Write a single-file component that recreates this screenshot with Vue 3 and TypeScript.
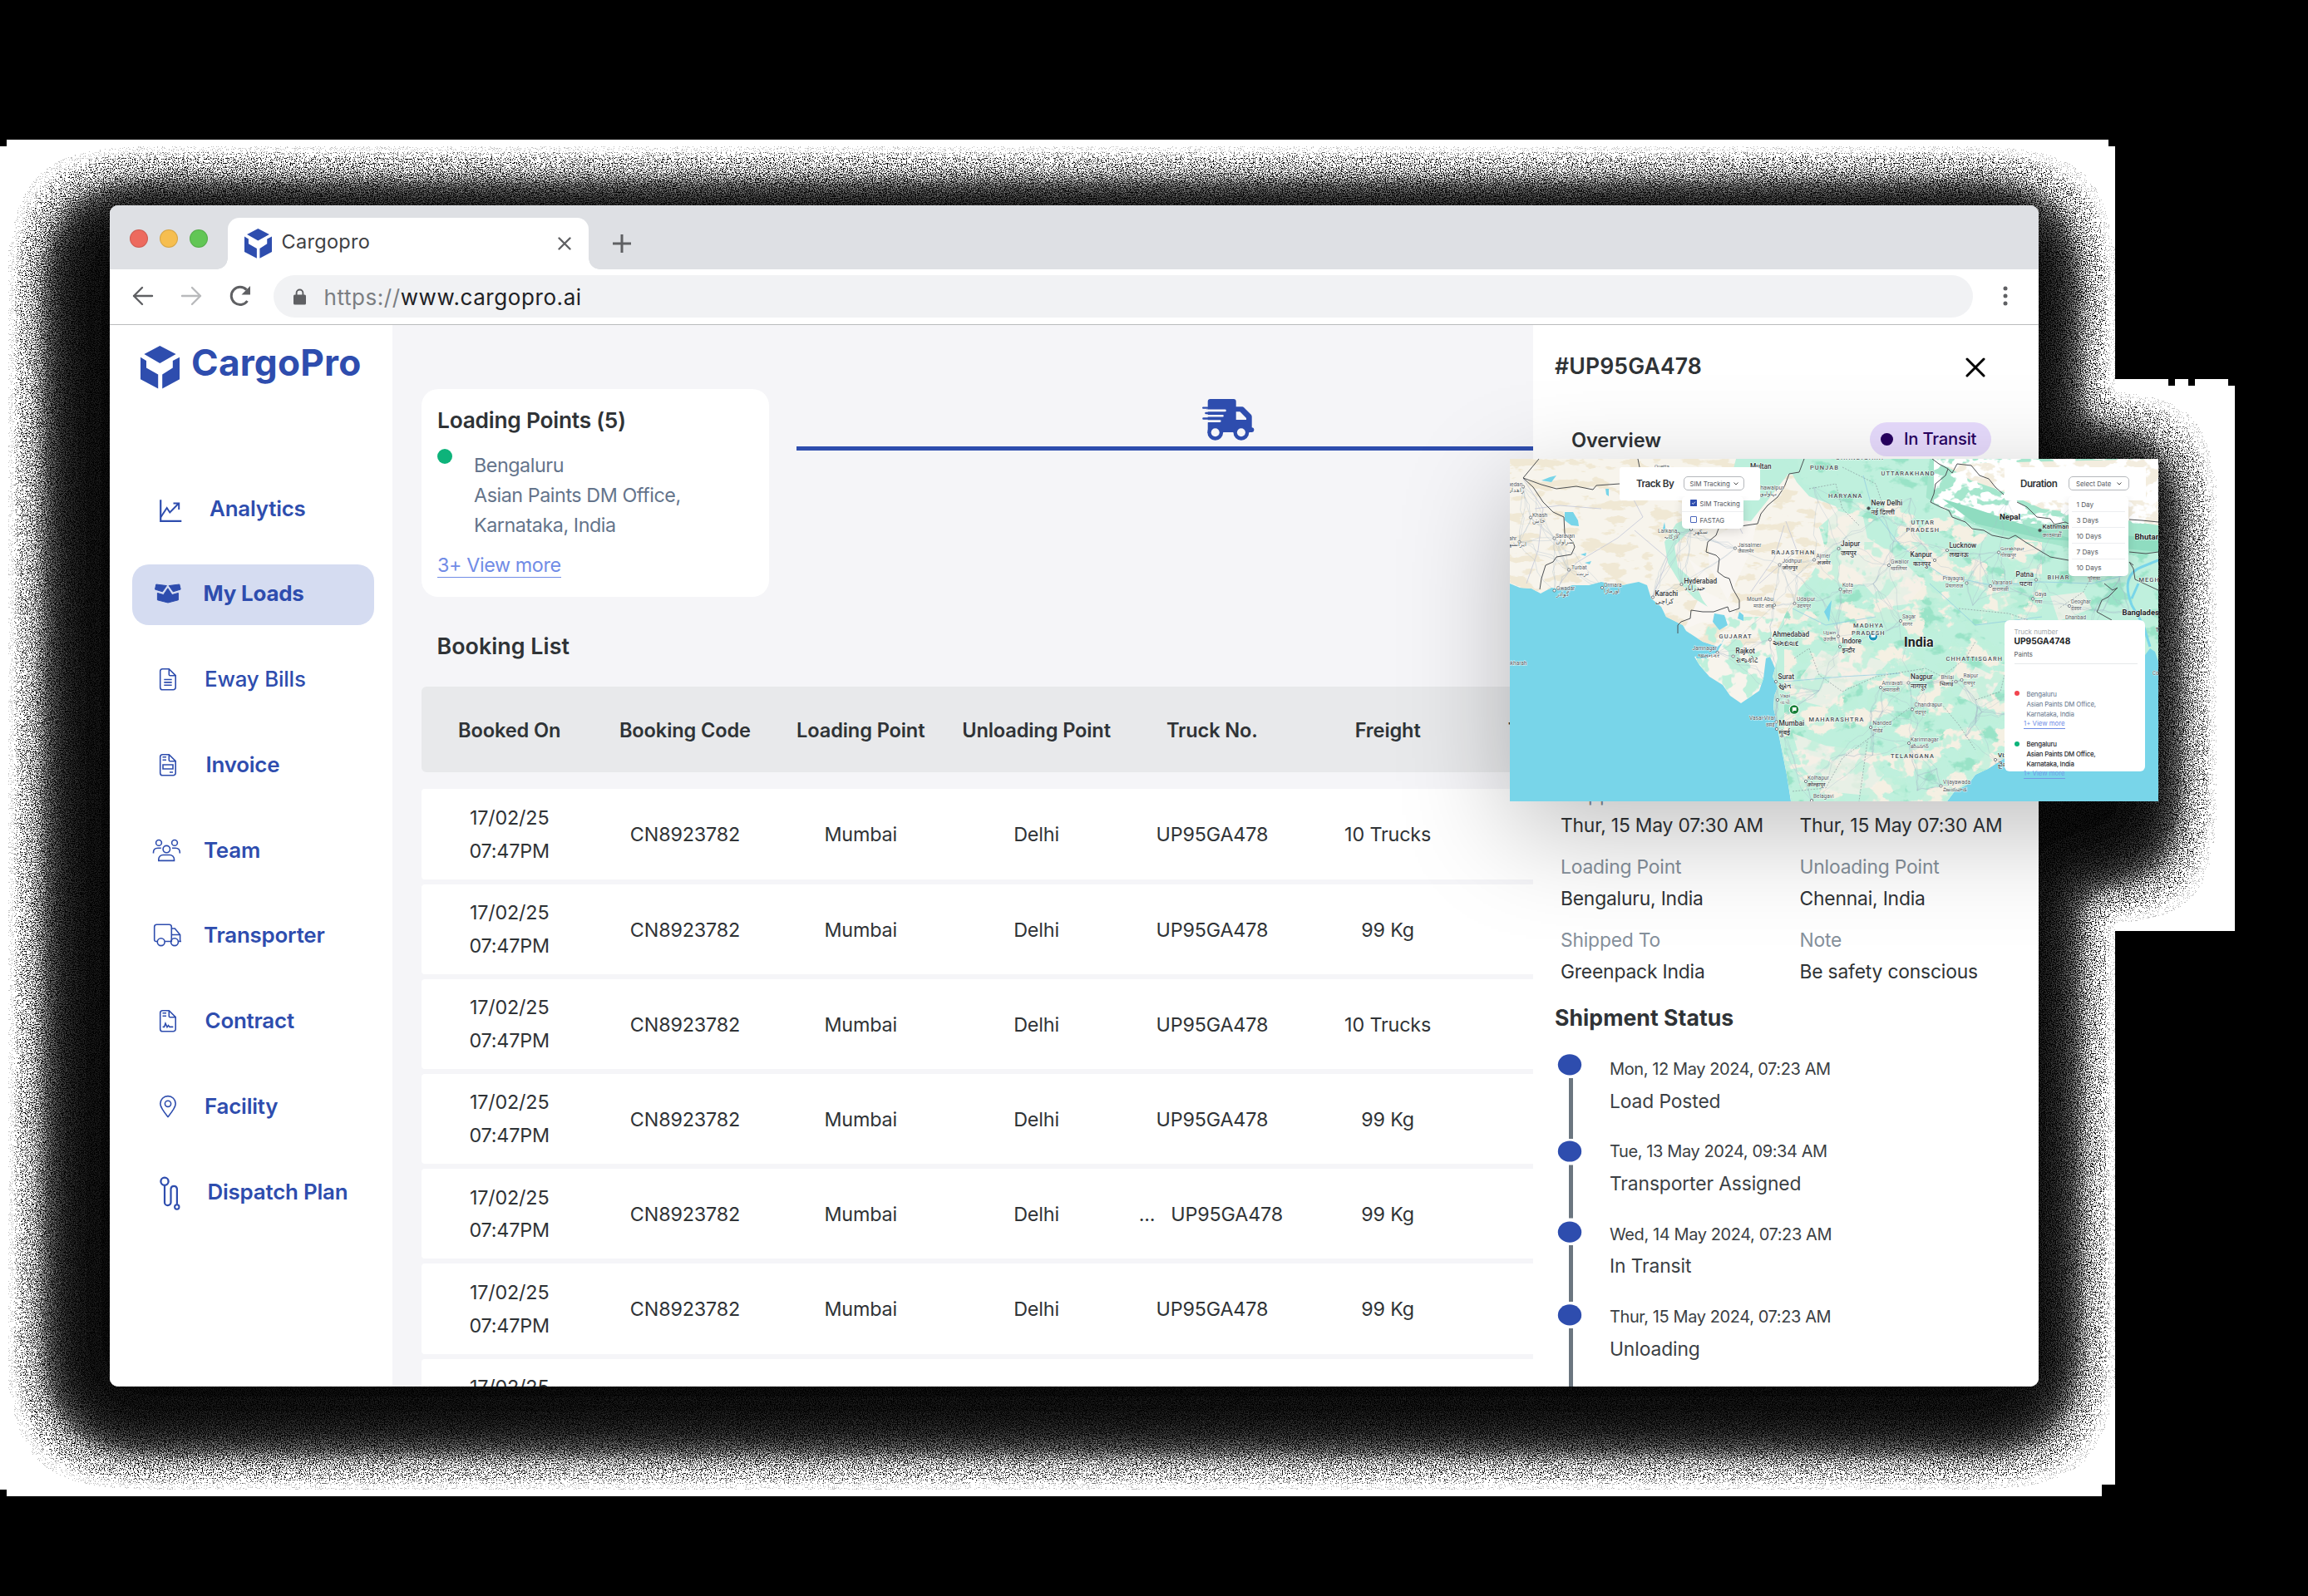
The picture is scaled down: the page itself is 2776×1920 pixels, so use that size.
<script setup lang="ts">
type Label = [x: number, y: number, size: number, kind: string, text: string]

interface NavItem { label: string; pad: number; weight: number; icon: string }

const nav: NavItem[] = [
  { label: 'Analytics', pad: 9, weight: 600, icon: 'chart' },
  { label: 'My Loads', pad: 1.5, weight: 700, icon: 'box' },
  { label: 'Eway Bills', pad: 3, weight: 500, icon: 'bill' },
  { label: 'Invoice', pad: 4.5, weight: 600, icon: 'invoice' },
  { label: 'Team', pad: 2, weight: 600, icon: 'team' },
  { label: 'Transporter', pad: 2, weight: 600, icon: 'truck' },
  { label: 'Contract', pad: 3.5, weight: 600, icon: 'contract' },
  { label: 'Facility', pad: 3, weight: 600, icon: 'pin' },
  { label: 'Dispatch Plan', pad: 6.5, weight: 600, icon: 'route' },
]

const columns = ['Booked On', 'Booking Code', 'Loading Point', 'Unloading Point', 'Truck No.', 'Freight', 'Transporter']
const freight = ['10 Trucks', '99 Kg', '10 Trucks', '99 Kg', '99 Kg', '99 Kg', '99 Kg']

const fields = [
  ['Shipped Date', 'Thur, 15 May 07:30 AM'],
  ['Estimated Date', 'Thur, 15 May 07:30 AM'],
  ['Loading Point', 'Bengaluru, India'],
  ['Unloading Point', 'Chennai, India'],
  ['Shipped To', 'Greenpack India'],
  ['Note', 'Be safety conscious'],
]

const steps = [
  { date: 'Mon, 12 May 2024, 07:23 AM', label: 'Load Posted', cy: 12.8, from: 29, to: 102 },
  { date: 'Tue, 13 May 2024, 09:34 AM', label: 'Transporter Assigned', cy: 18, from: 34.5, to: 98.5 },
  { date: 'Wed, 14 May 2024, 07:23 AM', label: 'In Transit', cy: 15.2, from: 31, to: 99 },
  { date: 'Thur, 15 May 2024, 07:23 AM', label: 'Unloading', cy: 15.9, from: 32, to: 104 },
]

const durations = ['1 Day', '3 Days', '10 Days', '7 Days', '10 Days']

// Inverse falloff: the grain gets brighter as the shadow thins out.
const falloff = Array.from({ length: 256 }, (_, i) => (i === 0 ? 1 : Math.min(1, 0.0085 / (i / 255))).toFixed(4)).join(' ')
// Past the last visible step of the shadow the surface is plain white.
const rim = Array.from({ length: 256 }, (_, i) => [1, 0.75, 0.4, 0.15][i] ?? 0).join(' ')

const labels: Label[] = [
  [174, 11, 6, 's', 'Quetta'], [289, 11.5, 8.2, 'c', 'Multan'], [361, 12.5, 7.4, 'r', 'PUNJAB'], [293, 37, 7, 's', 'Bahawalpur'],
  [299, 44, 6.5, 's', 'بہاولپور'], [383, 46.7, 7.4, 'r', 'HARYANA'], [-10, 33, 6.5, 's', 'Zahedan'], [-3, 40, 6.5, 's', 'زاهدان'],
  [27, 69.7, 6.5, 's', 'Khash'], [27, 77, 6.5, 's', 'خاش'], [55, 94.5, 6.5, 's', 'Saravan'], [55, 101.5, 6.5, 's', 'سراوان'],
  [-19, 98, 6.5, 's', 'Iranshahr'], [-5, 105, 6.5, 's', 'ایرانشهر'], [74, 132.5, 6.5, 's', 'Turbat'], [80, 139.5, 6.5, 's', 'تربت'],
  [56, 157.5, 6.5, 's', 'Gwadar'], [56, 165, 6.5, 's', 'گوادر'], [113, 153.5, 6.5, 's', 'Ormara'], [113, 161, 6.5, 's', 'اورماڑا'],
  [178, 88.5, 6.5, 's', 'Larkana'], [185, 95.5, 6.5, 's', 'لاڑکانہ'], [221, 90, 6.5, 's', 'سکھر'],
  [209.5, 149.5, 8.2, 'c', 'Hyderabad'], [209.5, 158, 7.5, 'c', 'حيدرآباد'], [174.5, 164.5, 8.2, 'c', 'Karachi'], [175, 173.5, 8, 'c', 'كراچی'],
  [274, 105.5, 6.5, 's', 'Jaisalmer'], [274, 113, 6.2, 's', 'जैसलमेर'], [314.5, 114.5, 7.4, 'r', 'RAJASTHAN'],
  [327.5, 125, 6.5, 's', 'Jodhpur'], [327.5, 133, 7, 'c', 'जोधपुर'], [368.5, 119, 6.5, 's', 'Ajmer'], [369, 127, 6.5, 'c', 'अजमेर'],
  [285, 171, 6.5, 's', 'Mount Abu'], [293, 179, 6.5, 's', 'माउंट आबू'], [345, 171, 6.5, 's', 'Udaipur'], [345, 179, 6.5, 's', 'उदयपुर'],
  [251.5, 216, 7.4, 'r', 'GUJARAT'], [316, 214, 8.2, 'c', 'Ahmedabad'], [316, 224.5, 7.6, 'c', 'અમદાવાદ'],
  [377, 210.5, 6.2, 's', 'Ujjain'], [377, 218.5, 6.2, 's', 'उज्जैन'], [219.5, 230, 6.5, 's', 'Jamnagar'], [226, 238.5, 6.5, 'c', 'જામનગર'],
  [271.5, 233.5, 8.2, 'c', 'Rajkot'], [271.5, 244.5, 7.8, 'c', 'રાજકોટ'], [322.5, 264.5, 8.2, 'c', 'Surat'], [322.5, 275.5, 7.8, 'c', 'સુરત'],
  [325, 286.5, 6.2, 's', 'Vapi'], [325, 294.5, 6.2, 's', 'વાપી'], [288, 314, 6.5, 's', 'Vasai-Virar'], [308, 321.5, 6, 's', 'वसई'],
  [323.5, 321, 8.4, 'c', 'Mumbai'], [323.5, 332, 8, 'c', 'मुंबई'], [359.5, 315.7, 7.4, 'r', 'MAHARASHTRA'],
  [358, 385.5, 6.5, 's', 'Kolhapur'], [358, 394, 6.5, 'c', 'कोल्हापूर'], [365, 408, 6.5, 's', 'Belagavi'], [-7, 248, 6.5, 's', 'Ankharah'],
  [392, 0.7, 7.4, 'r', 'CHANDIGARH'], [446.5, 19.7, 7.4, 'r', 'UTTARAKHAND'], [434.5, 55.5, 8.4, 'c', 'New Delhi'], [434.5, 66.5, 8, 'c', 'नई दिल्ली'],
  [482.5, 79, 7.4, 'r', 'UTTAR'], [476.5, 88, 7.4, 'r', 'PRADESH'], [398, 105, 8.2, 'c', 'Jaipur'], [398, 116, 8, 'c', 'जयपुर'],
  [481.5, 118, 8.2, 'c', 'Kanpur'], [485, 129, 8, 'c', 'कानपुर'], [528.5, 106.5, 8.2, 'c', 'Lucknow'], [528.5, 117.5, 8, 'c', 'लखनऊ'],
  [458, 125.5, 6.5, 's', 'Gwalior'], [458, 133.5, 6.5, 's', 'ग्वालियर'], [590, 109.5, 6.2, 's', 'Gorakhpur'], [590, 118, 6.2, 's', 'गोरखपुर'],
  [589, 72.5, 9.6, 'b', 'Nepal'], [640.5, 84, 8, 'c', 'Kathmandu'], [640.5, 93.5, 7, 's', 'काठमाडौँ'], [751.5, 96.5, 9.6, 'b', 'Bhutan'],
  [520.5, 146, 6.3, 's', 'Prayagraj'], [524, 154.5, 6.3, 's', 'प्रयागराज'], [580, 150.5, 6.3, 's', 'Varanasi'], [580, 159, 6.3, 's', 'वाराणसी'],
  [608.5, 141.5, 8.2, 'c', 'Patna'], [613, 152.5, 8, 'c', 'पटना'], [646.5, 144.5, 7.4, 'r', 'BIHAR'], [695, 145.5, 6.3, 's', 'पूर्णिया'],
  [756.5, 147.5, 7.4, 'r', 'MEGHALAYA'], [631.5, 165, 6.3, 's', 'Gaya'], [631.5, 173.5, 6.3, 's', 'गया'], [675, 174, 6.3, 's', 'Deoghar'],
  [675, 182, 6, 's', 'देवघर'], [668, 192.5, 6.3, 's', 'Dhanbad'], [400, 153.5, 6.3, 's', 'Kota'], [400, 161.5, 6.3, 's', 'कोटा'],
  [736.5, 187.5, 9.4, 'b', 'Bangladesh'], [472, 192, 6.3, 's', 'Sagar'], [472, 200.5, 6.3, 's', 'सागर'],
  [413, 202.5, 7.4, 'r', 'MADHYA'], [399.5, 222, 8.2, 'c', 'Indore'], [399.5, 232.5, 7.6, 'c', 'इन्दौर'],
  [474, 226, 16, 'b', 'India'], [524.5, 243, 7.4, 'r', 'CHHATTISGARH'], [482, 265, 8.2, 'c', 'Nagpur'], [482, 276, 8, 'c', 'नागपूर'],
  [518.5, 264.5, 6.3, 's', 'Bhilai'], [517, 272.5, 6.6, 'c', 'भिलाई'], [545.5, 263, 6.3, 's', 'Raipur'], [545.5, 271.5, 6.3, 's', 'रायपुर'],
  [447.5, 271.5, 6.3, 's', 'Amravati'], [447.5, 280, 6.3, 's', 'अमरावती'], [486.5, 298, 6.5, 's', 'Chandrapur'], [487, 306.5, 6.3, 's', 'चंद्रपूर'],
  [436.5, 320, 6.5, 's', 'Nanded'], [436.5, 328.5, 6.3, 's', 'नांदेड'], [482, 339.5, 6.5, 's', 'Karimnagar'], [482, 348, 6.3, 's', 'కరీంనగర్'],
  [458, 359.5, 7.4, 'r', 'TELANGANA'], [587, 358.5, 8, 'c', 'Vizag'], [587, 370, 8, 'c', 'వైజాగ్'], [521, 391, 6.5, 's', 'Vijayawada'],
  [521, 399.5, 6.3, 's', 'విజయవాడ'], [773, 259.5, 6.3, 's', "Cox's"], [776.5, 208, 7.4, 'r', 'TR'],
]

const cities: [number, number][] = [
  [16, 33.5], [25, 70.5], [53.5, 95.5], [11.5, 100], [71, 133.5], [53.5, 158.5], [111, 155], [202.5, 90], [206.5, 151], [172, 166.5],
  [218, 85], [271, 107.5], [324.5, 127.5], [366, 121.5], [342.5, 174], [318, 176], [313, 217.5], [249.5, 233], [268.5, 237.5], [320, 268],
  [322, 290], [320.5, 316.5], [321, 325], [356, 388], [363, 411], [395.5, 108], [511, 122], [526, 110], [456, 128], [588, 112.5],
  [549.5, 149.5], [578, 153], [633, 145.5], [629, 168.5], [673, 177], [397.5, 157], [470, 195], [397, 226], [395, 213.5], [479.5, 269.5],
  [536.5, 268], [543.5, 266], [446, 275], [484, 301.5], [434, 323], [480, 342], [584, 362], [518.5, 393.5],
]

function prng(seed: number) {
  let s = seed
  return () => (s = (s * 16807) % 2147483647) / 2147483647
}

// Meandering roads that join every town to its nearest neighbours.
const roads = (() => {
  const rnd = prng(71)
  const extra: [number, number][] = []
  for (let i = 0; i < 60; i++) extra.push([345 + rnd() * 400, 5 + rnd() * 400])
  const pts = [...cities, ...extra]
  const out: string[] = []
  pts.forEach(([x, y]) => {
    pts
      .map(([a, b]) => ({ a, b, d: Math.hypot(a - x, b - y) }))
      .filter((p) => p.d > 1 && p.d < 120)
      .sort((p, q) => p.d - q.d)
      .slice(0, 4)
      .forEach(({ a, b, d }) => {
        let path = `M${x} ${y}`
        for (let k = 1; k < 5; k++) {
          const t = k / 5
          const j = d * 0.13
          path += `L${(x + (a - x) * t + (rnd() - 0.5) * j).toFixed(1)} ${(y + (b - y) * t + (rnd() - 0.5) * j).toFixed(1)}`
        }
        out.push(path + `L${a} ${b}`)
      })
  })
  return out.join('')
})()

const land =
  'M0 0H780V245L773 247L764 240L750 262L700 300L640 330L610 345L600 357L575 373L560 380L552 391L535 400L526 412H338L333 380L327 350L323 330L320 312L317 300L318 285L322 275L316 262L319 252L313 238L308 240L305 264L300 279L278 294L265 285L256 272L240 262L228 248L222 238L236 236L248 232L256 222L250 226L232 220L212 207L208 200L196 194L188 190L182 178L170 168L165 152L155 148L130 153L118 150L110 148L95 152L75 152L62 157L50 155L37 162L26 156L12 155L0 150Z'
const lush =
  'M345 0H780V250L764 240L750 262L700 300L640 330L610 345L600 357L575 373L560 380L552 391L535 400L526 412H338L333 380L327 350L323 330L320 312L317 300L318 285L322 275L316 262L322 240L318 215L330 190L345 160L362 140L380 110L372 82L395 62L380 36L352 30Z'
</script>

<template>
  <div class="stage">
    <svg class="halo" width="2776" height="1920" viewBox="0 0 2776 1920">
      <defs>
        <filter id="grain" filterUnits="userSpaceOnUse" x="0" y="0" width="2776" height="1920" color-interpolation-filters="sRGB">
          <feGaussianBlur in="SourceAlpha" stdDeviation="38" />
          <feColorMatrix result="depth" values="0 0 0 1 0  0 0 0 1 0  0 0 0 1 0  0 0 0 0 1" />
          <feComponentTransfer in="depth" result="gain">
            <feFuncR type="table" :tableValues="falloff" />
            <feFuncG type="table" :tableValues="falloff" />
            <feFuncB type="table" :tableValues="falloff" />
          </feComponentTransfer>
          <feComponentTransfer in="depth" result="rim">
            <feFuncR type="table" :tableValues="rim" />
            <feFuncG type="table" :tableValues="rim" />
            <feFuncB type="table" :tableValues="rim" />
          </feComponentTransfer>
          <feTurbulence type="fractalNoise" baseFrequency="0.83" numOctaves="2" seed="8" />
          <feColorMatrix result="noise" values="4 0 0 0 -1.5  4 0 0 0 -1.5  4 0 0 0 -1.5  0 0 0 0 1" />
          <feComposite in="gain" in2="noise" operator="arithmetic" k1="9" k2="0" k3="0" k4="0" result="speckle" />
          <feComposite in="speckle" in2="rim" operator="arithmetic" k1="0" k2="1" k3="1" k4="0" />
        </filter>
        <clipPath id="haloArea">
          <path d="M8 168H2536V176H2544V456H2608V464H2616V456H2632V464H2640V456H2680V464H2688V1120H2544V1786H2528V1800H8V1792H0V176H8Z" />
        </clipPath>
      </defs>
      <g clip-path="url(#haloArea)">
        <g filter="url(#grain)">
          <rect x="100" y="266" width="2354" height="1436" rx="40" />
          <rect x="2200" y="560" width="376" height="462" rx="20" />
        </g>
      </g>
    </svg>

    <div class="window">
      <header class="tabs">
        <div class="lights"><i class="red" /><i class="yellow" /><i class="green" /></div>
        <div class="tab">
          <svg class="fav" viewBox="0 0 47 52" preserveAspectRatio="none">
            <path d="M23.3 0L42.6 10L23.3 21L4.4 10ZM0 13.7L7 18V26.5L21.2 34.5V51.5L0 40.3ZM47 13.7L38.8 18V26.5L26.2 34.5V51.5L47 40.3Z" />
          </svg>
          <span>Cargopro</span>
          <svg class="tabx" viewBox="0 0 16 16"><path d="M1.5 1.5L14.5 14.5M14.5 1.5L1.5 14.5" /></svg>
        </div>
        <svg class="plus" viewBox="0 0 22 22"><path d="M11 0V22M0 11H22" /></svg>
      </header>
      <div class="toolbar">
        <svg class="tools" viewBox="0 0 197 65">
          <g fill="none" stroke="#5f6063" stroke-width="2.4" stroke-linecap="round" stroke-linejoin="round">
            <path d="M51 32H29M39 22L29 32L39 42" />
            <path d="M87 32H109M99 22L109 32L99 42" stroke="#b9babc" />
            <path d="M165.5 38A10.6 10.6 0 1 1 164.5 24.6" stroke-width="3" stroke-linecap="butt" />
          </g>
          <path d="M169 20V30.5H158.5Z" fill="#5f6063" />
        </svg>
        <div class="url">
          <svg class="lock" viewBox="0 0 15 20">
            <path d="M3.6 8V5.4a3.9 3.9 0 0 1 7.8 0V8" fill="none" stroke="#5f6063" stroke-width="1.9" />
            <rect y="7.6" width="15" height="12" rx="1.6" fill="#5f6063" />
          </svg>
          <p><span>https://</span>www.cargopro.ai</p>
        </div>
        <svg class="dots" viewBox="0 0 6 24"><circle cx="3" cy="3" r="2.5" /><circle cx="3" cy="12" r="2.5" /><circle cx="3" cy="21" r="2.5" /></svg>
      </div>

      <div class="page">
        <aside class="sidebar">
          <div class="brand">
            <svg viewBox="0 0 47 52">
              <path d="M23.3 0L42.6 10L23.3 21L4.4 10ZM0 13.7L7 18V26.5L21.2 34.5V51.5L0 40.3ZM47 13.7L38.8 18V26.5L26.2 34.5V51.5L47 40.3Z" />
            </svg>
            <b>CargoPro</b>
          </div>
          <nav>
            <a v-for="item in nav" :key="item.label" :class="{ active: item.icon === 'box' }">
              <svg viewBox="0 0 84 73">
                <template v-if="item.icon === 'chart'">
                  <path d="M34.2 24.3V49.8H59.3" stroke-width="2.2" />
                  <path d="M34.5 45L41.7 34L45.3 39.5L55.5 29M49.5 28.4H56.2V36" stroke-width="2" />
                </template>
                <g v-else-if="item.icon === 'box'" fill="#2e4dae" stroke="#2e4dae" stroke-width="1" stroke-linejoin="round">
                  <path d="M28.8 24L41.4 25.6L36.4 32.8L27.5 30ZM56.8 24L44.2 25.6L49.2 32.8L58.2 30Z" />
                  <path d="M30.4 34.4L37.6 36.6L42.8 28.8L48 36.6L55.4 34.4V42.8L43 46L30.4 42.8Z" />
                </g>
                <template v-else-if="item.icon === 'bill'">
                  <path d="M44.3 22.8H36.5a2.8 2.8 0 0 0-2.8 2.8V44.9a2.8 2.8 0 0 0 2.8 2.8H49.4a2.8 2.8 0 0 0 2.8-2.8V30.7ZV29.4a1.3 1.3 0 0 0 1.3 1.3H52.2" />
                  <path d="M38.3 35.5H47.7M38.3 38.9H47.7M38.3 42.3H47.7" />
                </template>
                <template v-else-if="item.icon === 'invoice'">
                  <path d="M44.3 22.8H36.5a2.8 2.8 0 0 0-2.8 2.8V44.9a2.8 2.8 0 0 0 2.8 2.8H49.4a2.8 2.8 0 0 0 2.8-2.8V30.7ZV29.4a1.3 1.3 0 0 0 1.3 1.3H52.2" />
                  <path d="M36.5 25.8H41M36.5 29.2H41M37 35H49V40H37ZM45 44H49" />
                </template>
                <template v-else-if="item.icon === 'team'">
                  <circle cx="32" cy="25.9" r="3.4" /><circle cx="51" cy="25.9" r="3.4" /><circle cx="41.3" cy="33.6" r="4.2" />
                  <path d="M25.5 38.5V37.5C25.5 34 28 32.3 31 32.3H34.8M57.3 38.5V37.5C57.3 34 55 32.3 52 32.3H48M31.8 47.4V45.8A5.3 5.3 0 0 1 37.1 40.5H45.2A5.3 5.3 0 0 1 50.5 45.8V47.4Z" />
                </template>
                <template v-else-if="item.icon === 'truck'">
                  <path d="M30 42.5H28.6A1.9 1.9 0 0 1 26.7 40.6V25A2.8 2.8 0 0 1 29.5 22.2H44.5A2.8 2.8 0 0 1 47.3 25V42.5H39.2M47.3 27H51.3L57.6 34.5V42.5H55.5M47.3 34.5H57.6M47 42.5H47.3M57.6 42.5H59" />
                  <circle cx="34.7" cy="43.2" r="4.4" /><circle cx="51" cy="43.2" r="4.4" />
                </template>
                <template v-else-if="item.icon === 'contract'">
                  <path d="M44.3 22.8H36.5a2.8 2.8 0 0 0-2.8 2.8V44.9a2.8 2.8 0 0 0 2.8 2.8H49.4a2.8 2.8 0 0 0 2.8-2.8V30.7ZV29.4a1.3 1.3 0 0 0 1.3 1.3H52.2" />
                  <path d="M36.5 25.8H41M36.5 29.2H41M36.6 42.4H38.5L40 38.2L42 42.6L43.5 40.5L45 42.4H49.3" />
                </template>
                <template v-else-if="item.icon === 'pin'">
                  <path d="M43 47.6C38 41.5 33.8 36.5 33.8 31.8a9.2 9.2 0 0 1 18.4 0C52.2 36.5 48 41.5 43 47.6Z" />
                  <circle cx="43" cy="31.8" r="3.6" />
                </template>
                <template v-else>
                  <circle cx="39" cy="22.3" r="4.6" stroke-width="2.3" />
                  <path d="M39 27.2V47.4a3.75 3.75 0 0 0 7.5 0V31a3.75 3.75 0 0 1 7.4 0V49.8" stroke-width="2.2" />
                  <circle cx="53.8" cy="53" r="2.7" stroke-width="2" />
                </template>
              </svg>
              <span :style="{ paddingLeft: item.pad + 'px', fontWeight: item.weight }">{{ item.label }}</span>
            </a>
          </nav>
        </aside>

        <main>
          <div class="top">
            <section class="card">
              <h2>Loading Points (5)</h2>
              <div class="place"><i /><p>Bengaluru<br />Asian Paints DM Office,<br />Karnataka, India</p></div>
              <a>3+ View more</a>
            </section>
            <div class="route">
              <svg viewBox="0 0 63 50">
                <path d="M9.7 0H37.7a3 3 0 0 1 3 3V9.3H48a3 3 0 0 1 2.2 1L58.5 18.5a4 4 0 0 1 1.2 2.8V34.2h.3a2.4 2.4 0 0 1 2.3 2.4v1a2.4 2.4 0 0 1-2.4 2.4H56A9.3 9.3 0 0 1 37.7 40H25A9.3 9.3 0 0 1 6.7 40V11.8H1.2a1.2 1.2 0 0 1 0-2.4H6.7V3a3 3 0 0 1 3-3Z" />
                <path d="M5 12H27.5V28H5Z" />
                <path d="M5.4 12.4H6.7V28.4H1V12.4Z" fill="#f5f5f8" />
                <path d="M1.5 23.5H26M4.5 17H26" stroke="#2e4dae" stroke-width="2.6" stroke-linecap="round" />
                <path d="M6 13.9H27.5M6 20.2H24.5M6 26.6H21.3" stroke="#f5f5f8" stroke-width="2.6" stroke-linecap="round" />
                <path d="M40.7 15.3H45.4L53 23V25H40.7Z" fill="#f5f5f8" />
                <circle cx="15.7" cy="40.3" r="9.4" /><circle cx="46.9" cy="40.3" r="9.4" />
                <circle cx="15.7" cy="40.3" r="5" fill="#f5f5f8" /><circle cx="46.9" cy="40.3" r="5" fill="#f5f5f8" />
              </svg>
              <hr />
            </div>
          </div>
          <h3>Booking List</h3>
          <div class="table">
            <div class="thead"><span v-for="c in columns" :key="c">{{ c }}</span></div>
            <div v-for="(f, i) in freight" :key="i" class="row">
              <span>17/02/25<br />07:47PM</span><span>CN8923782</span><span>Mumbai</span><span>Delhi</span>
              <span class="plate"><em v-if="i === 4">...</em>UP95GA478</span><span>{{ f }}</span><span />
            </div>
          </div>
        </main>

        <section class="panel">
          <div class="phead">
            <h2>#UP95GA478</h2>
            <svg viewBox="0 0 24 24"><path d="M2 2L22 22M22 2L2 22" /></svg>
          </div>
          <div class="overview">
            <h3>Overview</h3>
            <span class="badge"><i />In Transit</span>
          </div>
          <dl>
            <div v-for="[k, v] in fields" :key="k"><dt>{{ k }}</dt><dd>{{ v }}</dd></div>
          </dl>
          <h2 class="status">Shipment Status</h2>
          <ol>
            <li v-for="s in steps" :key="s.label">
              <svg width="62" height="99" viewBox="0 0 62 99">
                <ellipse cx="14" :cy="s.cy" rx="14.2" ry="12.6" fill="#2e4dae" />
                <rect x="13" :y="s.from" width="5" :height="s.to - s.from" fill="#6b7680" />
              </svg>
              <div><small>{{ s.date }}</small><p>{{ s.label }}</p></div>
            </li>
          </ol>
        </section>
      </div>
      <div class="map-shadow" />
    </div>

    <div class="map">
      <svg class="tiles" width="780" height="412" viewBox="0 0 780 412">
        <defs>
          <clipPath id="landClip"><path :d="land" /></clipPath>
          <clipPath id="lushClip"><path :d="lush" /></clipPath>
          <filter id="sand" x="0" y="0" width="1" height="1" color-interpolation-filters="sRGB">
            <feTurbulence type="fractalNoise" baseFrequency="0.028 0.04" numOctaves="5" seed="12" />
            <feColorMatrix values="0 0 0 0 .96  0 0 0 0 .94  0 0 0 0 .89  16 0 0 0 -8.3" />
          </filter>
          <filter id="forest" x="0" y="0" width="1" height="1" color-interpolation-filters="sRGB">
            <feTurbulence type="fractalNoise" baseFrequency="0.035 0.05" numOctaves="4" seed="31" />
            <feColorMatrix values="0 0 0 0 .6  0 0 0 0 .89  0 0 0 0 .78  9 0 0 0 -5.2" />
          </filter>
          <filter id="ridge" x="0" y="0" width="1" height="1" color-interpolation-filters="sRGB">
            <feTurbulence type="fractalNoise" baseFrequency="0.035 0.08" numOctaves="4" seed="5" />
            <feColorMatrix values="0 0 0 0 .94  0 0 0 0 .91  0 0 0 0 .83  14 0 0 0 -7.6" />
          </filter>
          <filter id="snow" x="0" y="0" width="1" height="1" color-interpolation-filters="sRGB">
            <feTurbulence type="fractalNoise" baseFrequency="0.06 0.09" numOctaves="3" seed="9" />
            <feColorMatrix values="0 0 0 0 1  0 0 0 0 1  0 0 0 0 1  12 0 0 0 -5.4" />
          </filter>
          <filter id="farms" x="0" y="0" width="1" height="1" color-interpolation-filters="sRGB">
            <feTurbulence type="fractalNoise" baseFrequency="0.05" numOctaves="3" seed="2" />
            <feColorMatrix values="0 0 0 0 .75  0 0 0 0 .94  0 0 0 0 .86  16 0 0 0 -8.6" />
          </filter>
          <clipPath id="hills"><path d="M450 0H780V112L720 118L650 102L590 92L540 72L500 46L470 30Z" /></clipPath>
        </defs>
        <rect width="780" height="412" fill="#78d5e9" />
        <path :d="land" fill="#f7f4ec" />
        <g clip-path="url(#landClip)">
          <rect width="400" height="230" filter="url(#ridge)" />
          <path d="M215 120L235 160L275 178L262 200L232 196L210 205L240 140Z M300 60L290 110L262 170L240 130L238 100Z" fill="#f9f6f2" />
          <path d="M272 0H360L350 20L335 18L310 50L290 75L250 72L225 82L212 90L198 105L202 130L222 148L232 170L238 178L222 168L205 150L190 125L186 100L200 78L230 64L262 40Z" fill="#bcefdc" />
          <path d="M330 0H400V60L360 45L345 28Z" fill="#bcefdc" />
          <rect x="225" y="190" width="130" height="105" filter="url(#farms)" />
          <path :d="lush" fill="#bff0dd" />
          <g clip-path="url(#lushClip)">
            <rect x="330" width="450" height="412" filter="url(#forest)" />
            <rect x="330" y="50" width="310" height="362" filter="url(#sand)" />
            <g fill="#f6f1e8" opacity=".75">
              <path d="M384 60L425 70L430 95L470 120L500 150L478 175L450 178L425 150L400 150L370 125L382 100Z" />
              <path d="M375 230L420 235L455 245L440 262L410 270L385 300L345 290L350 262Z" />
              <path d="M340 330L380 345L420 350L450 380L430 405L380 400L352 372Z" />
              <path d="M560 250L590 265L570 300L540 285Z M650 165L690 160L700 180L660 195Z" />
            </g>
            <rect x="340" y="100" width="300" height="312" filter="url(#farms)" opacity=".8" />
          </g>
          <g clip-path="url(#hills)">
            <path d="M505 0H780V112L720 118L650 102L590 92L540 72L500 52Z" fill="#a5e6cd" />
            <path d="M520 6L780 0V80L730 72L690 66L640 60L590 38L555 26Z" fill="#f3eddf" />
            <rect x="510" width="270" height="78" filter="url(#snow)" />
            <path d="M520 48L560 60L620 80L690 100L640 96L560 78Z M738 92L780 96V112L740 108Z" fill="#8fdcc0" />
          </g>
        </g>
        <g clip-path="url(#landClip)">
          <path :d="roads" fill="none" stroke="#a9bccb" stroke-width=".6" opacity=".55" />
          <path d="M16 24L40 60L34 110L20 150M140 32L160 70L130 95L80 125L60 150M150 86L190 120L172 166M110 60L60 56L30 60M330 80L318 120L290 160M332 75L345 110L300 150M240 25L265 60L280 90" fill="none" stroke="#c3c6d8" stroke-width=".8" />
          <path d="M425 20L436 60L470 105L520 140L580 152L640 148L700 150L740 140M505 150L560 200L640 190M330 268L400 262L470 258M340 180L380 200L440 190" fill="none" stroke="#8ec9e2" stroke-width=".7" />
        </g>
        <g fill="#78d5e9">
          <path d="M66 64L76 64L82 74L83 81L74 80L66 74Z M48 22L56 20L50 28L38 26Z M115 36H119V45L116 43Z M246 186L258 188L262 200L252 206L244 196Z M276 184L281 188V195L274 192Z M225 234L246 230L256 220L258 214L250 232L236 240L224 240Z M186 76L188 90L184 84Z M85 115L92 113L91 117Z M90 125L98 123L96 127Z M387 170L378 184L384 196Z" />
        </g>
        <path d="M745 248L752 232L758 225L764 236L770 228L776 232L780 244V250H745Z" fill="#78d5e9" />
        <path d="M748 176C738 150 744 136 760 130L780 122M748 176L762 200L770 226M756 150L748 168" fill="none" stroke="#78d5e9" stroke-width="3" />
        <g fill="none" stroke="#4c4f52" stroke-width="1" stroke-linejoin="round">
          <path d="M35 0L16 23L28 34L40 52L52 64L65 70L66 90L76 100L78 106L74 115L56 118L52 124L43 128L38 144L36 157" />
          <path d="M16 23L38 31L56 36L80 33L100 37L104 32L132 30M154 0L156 10" />
          <path d="M354 0L348 16L336 18L330 34L322 46L310 56L302 66L298 78L284 80L272 82L266 78M251 84L248 92L238 100L236 112L248 116L252 120L250 136L258 142L264 144L268 156L276 170L276 180L264 184L262 178L245 184L232 184L218 182L217 192L206 196L202 200L202 210" />
          <path d="M508 0L516 6L527 12L524 20L512 30L510 42L506 52L518 58L528 62L532 70L548 76L556 84L570 86L580 92L600 96L608 92L620 100L630 106L650 118L672 122L690 128M527 12L532 17L538 6L555 8L565 20L576 24L584 34L594 43M610 52L622 58L630 66L634 70L650 72L655 79L668 76L672 78M745 73L760 74L780 76M745 112L765 114L780 112M715 150L725 158L731 155L720 166L712 170L708 180L706 184L724 194V206M750 128L745 124L750 132L752 145L780 158" />
        </g>
        <g fill="none" stroke="#7f8c92" stroke-width=".6" stroke-dasharray="2 1.6">
          <path d="M360 36L392 30L400 60L420 80M342 240L360 228L372 260L400 280L440 262L500 252L520 262L548 240L560 220M340 400L380 396L400 360L440 330L480 300L520 296L540 320L560 350M540 180L600 186L640 200M400 10L440 30L450 60M430 340L420 412M560 290L590 280L600 240M700 140L690 160L660 180" />
        </g>
        <g fill="#fff" stroke="#5d6367" stroke-width=".8">
          <circle v-for="(c, i) in cities" :key="i" :cx="c[0]" :cy="c[1]" r="1.6" />
          <circle cx="431.5" cy="59.5" r="1.8" fill="#444" /><circle cx="637.5" cy="86" r="1.8" fill="#444" />
        </g>
        <circle cx="437" cy="213.5" r="5.6" fill="#1d95b8" stroke="#fff" />
        <rect x="434.3" y="210.8" width="5.4" height="4" rx="1" fill="#fff" />
        <rect x="430" y="205.5" width="15" height="5" fill="#d5efe2" opacity=".8" />
        <g class="labels">
          <text v-for="(l, i) in labels" :key="i" :x="l[0]" :y="l[1]" :font-size="l[2]" :class="l[3]">{{ l[4] }}</text>
          <text x="411" y="211.5" font-size="7.4" class="r">PRADESH</text>
        </g>
        <circle cx="342" cy="301.5" r="6.2" fill="#fff" /><circle cx="342" cy="301.5" r="5.3" fill="#178038" />
        <path d="M339.8 299H344.6V303H340.8V304.6H339.8Z" fill="#fff" />
      </svg>

      <div class="box track"><b>Track By</b><span class="select">SIM Tracking<svg viewBox="0 0 6 4"><path d="M.5 .5L3 3L5.5 .5" /></svg></span></div>
      <div class="menu modes">
        <p><svg viewBox="0 0 8 8"><rect width="8" height="8" rx=".6" fill="#2e4dae" /><path d="M2 4L3.5 5.4L6 2.6" fill="none" stroke="#fff" stroke-width=".8" /></svg>SIM Tracking</p>
        <p><svg viewBox="0 0 8 8"><rect x=".5" y=".5" width="7" height="7" rx=".4" fill="#fff" stroke="#4a66bb" /></svg>FASTAG</p>
      </div>
      <div class="box duration"><b>Duration</b><span class="select">Select Date<svg viewBox="0 0 6 4"><path d="M.5 .5L3 3L5.5 .5" /></svg></span></div>
      <div class="menu days"><p v-for="(d, i) in durations" :key="i">{{ d }}</p></div>
      <div class="truck">
        <small>Truck number</small>
        <b>UP95GA4748</b>
        <p class="goods">Paints</p>
        <div class="stop"><i /><p>Bengaluru<br />Asian Paints DM Office,<br />Karnataka, India</p><a>1+ View more</a></div>
        <div class="stop done"><i /><p>Bengaluru<br />Asian Paints DM Office,<br />Karnataka, India</p><a>1+ View more</a></div>
      </div>
    </div>
  </div>
</template>

<style>
body { margin: 0; background: #000; }
</style>

<style scoped>
* { box-sizing: border-box; }
h2, h3, p, dl, dd, ol { margin: 0; padding: 0; }
i, em { font-style: normal; }
.stage {
  position: relative; width: 2776px; height: 1920px; padding: 247px 0 0 132px; overflow: hidden;
  background: #000; font-family: Inter, "Liberation Sans", sans-serif; color: #2f3336;
}
.halo { position: absolute; left: 0; top: 0; }
.window { position: relative; width: 2320px; height: 1421px; border-radius: 10px; overflow: hidden; background: #fff; display: flex; flex-direction: column; }

.tabs { height: 77px; flex: none; background: #dee0e4; display: flex; align-items: flex-start; }
.lights { display: flex; gap: 14.2px; padding: 29px 0 0 23.5px; width: 141.5px; }
.lights i { width: 22px; height: 22px; border-radius: 50%; border: 1px solid rgba(0, 0, 0, .12); }
.red { background: #ed6a5e; } .yellow { background: #f6be4f; } .green { background: #62c655; }
.tab { position: relative; width: 434.5px; height: 62px; margin-top: 15px; background: #fff; border-radius: 14px 14px 0 0; display: flex; align-items: center; padding: 0 21px 0 20px; color: #3d4043; }
.tab::before, .tab::after { content: ""; position: absolute; bottom: 0; width: 13px; height: 13px; }
.tab::before { left: -13px; background: radial-gradient(circle at 0 0, transparent 12.5px, #fff 13px); }
.tab::after { right: -13px; background: radial-gradient(circle at 100% 0, transparent 12.5px, #fff 13px); }
.fav { width: 33px; height: 36px; fill: #2e4dae; margin: 0 12px 1px 0; }
.tab span { font-size: 23.5px; letter-spacing: .3px; padding-bottom: 5px; flex: 1; }
.tabx { width: 16px; height: 16px; stroke: #5f6063; stroke-width: 2.4; stroke-linecap: round; }
.plus { width: 22px; height: 22px; stroke: #5f6063; stroke-width: 3; margin: 35px 0 0 29px; }

.toolbar { height: 67px; flex: none; display: flex; border-bottom: 1.5px solid #babcbd; }
.tools { width: 197px; height: 65px; flex: none; }
.url { width: 2043.5px; height: 51px; margin-top: 7px; border-radius: 26px; background: #f1f2f4; display: flex; align-items: center; padding: 0 0 0 24px; }
.lock { width: 15px; height: 20px; margin-right: 21.5px; }
.url p { font-size: 26px; letter-spacing: .58px; color: #202124; padding-top: 2px; }
.url span { color: #7b7e82; }
.dots { width: 6px; height: 24px; margin: 20px 0 0 36px; fill: #5f6063; }

.page { flex: 1; display: flex; min-height: 0; }
.sidebar { width: 340px; flex: none; background: #fff; }
.brand { height: 185.7px; padding: 25px 0 0 37px; display: flex; align-items: flex-start; gap: 14px; }
.brand svg { width: 47px; height: 52px; fill: #2e4dae; }
.brand b { font-size: 44.2px; line-height: 44px; letter-spacing: .2px; color: #2e4dae; margin-top: -2px; }
nav { display: flex; flex-direction: column; gap: 29.75px; margin: 0 22px 0 27px; }
nav a { height: 73px; border-radius: 20px; display: flex; align-items: center; color: #2e4dae; }
nav a.active { background: #d5dcf1; }
nav svg { width: 84px; height: 73px; flex: none; fill: none; stroke: #2e4dae; stroke-width: 1.6; }
nav span { font-size: 25.9px; letter-spacing: -.2px; padding-bottom: 4px; white-space: nowrap; }

main { flex: 1; min-width: 0; overflow: hidden; background: #f5f5f8; padding: 76.5px 0 0 35px; }
.top { display: flex; }
.card { width: 418px; height: 250px; flex: none; border-radius: 20px; background: #fff; padding: 20px 0 0 19px; }
.card h2 { font-size: 26.3px; line-height: 36px; font-weight: 600; letter-spacing: -.22px; }
.place { display: flex; margin-top: 18px; color: #64748b; }
.place i { width: 18px; height: 18px; margin: -2px 26px 0 0; border-radius: 50%; background: #0db37a; }
.place p { font-size: 23.3px; line-height: 36px; letter-spacing: -.44px; }
.card a { display: inline-block; margin-top: 16.2px; font-size: 23.3px; line-height: 28px; letter-spacing: -.38px; color: #718ce6; border-bottom: 1.7px solid #718ce6; }
.route { flex: 1; margin-left: 33px; }
.route svg { display: block; width: 63px; height: 50px; margin: 12px 0 0 487.5px; fill: #2e4dae; }
.route hr { margin: 7px 0 0; border: 0; height: 5px; background: #2e4dae; }
main h3 { margin: 41.2px 0 31.8px 18.5px; font-size: 26.8px; line-height: 36px; font-weight: 600; letter-spacing: .05px; }
.table { width: 1479px; display: flex; flex-direction: column; }
.thead, .row { display: grid; grid-template-columns: repeat(7, 211.3px); align-items: center; text-align: center; }
.thead { height: 103px; border-radius: 6px; background: #e8e9eb; padding-top: 2px; font-size: 23.6px; font-weight: 600; letter-spacing: -.12px; margin-bottom: 20px; }
.row { height: 108.2px; margin-bottom: 6px; background: #fff; border-radius: 4px; font-size: 23.3px; line-height: 39.8px; letter-spacing: -.15px; }
.row span:nth-child(n + 2) { padding-top: 1.5px; }
.plate { white-space: nowrap; }
.plate em { margin: 0 19px 0 -3px; }

.panel { width: 608.5px; flex: none; background: #fff; padding: 29px 0 0 26.5px; }
.phead { display: flex; justify-content: space-between; padding-right: 64px; height: 40px; }
.panel h2 { font-size: 26.6px; font-weight: 600; line-height: 40px; letter-spacing: .12px; }
.phead svg { width: 24px; height: 24px; margin-top: 9.5px; stroke: #000; stroke-width: 3; stroke-linecap: round; }
.overview { display: flex; justify-content: space-between; align-items: center; height: 41px; margin: 48px 57px 0 20px; }
.overview h3 { font-size: 23.6px; font-weight: 600; letter-spacing: -.1px; padding-top: 2px; }
.badge { width: 146px; height: 41px; border-radius: 21px; background: #e8dcfe; color: #280061; font-size: 20.2px; font-weight: 500; letter-spacing: -.2px; display: flex; align-items: center; padding: 0 0 3px 13px; }
.badge i { width: 15px; height: 15px; border-radius: 50%; background: #280061; margin: 2px 13px 0 0; }
dl { margin: 387.2px 0 0 7px; display: grid; grid-template-columns: 287.5px 1fr; row-gap: 12.2px; }
dt, dd { font-size: 22.8px; line-height: 37.8px; letter-spacing: -.17px; margin: 0; }
dt { color: #85909b; }
dl div:nth-child(-n + 2) dt { padding-top: 2px; line-height: 35.8px; }
.panel .status { margin-top: 19px; line-height: 36px; font-size: 26.6px; font-weight: 650; letter-spacing: .05px; }
ol { list-style: none; margin: 25.7px 0 0 4px; }
li { display: flex; height: 99.3px; color: #3b3f44; }
li svg { flex: none; width: 62px; overflow: visible; }
li small { display: block; font-size: 20px; line-height: 37.6px; letter-spacing: -.4px; }
li p { font-size: 22.8px; line-height: 37.6px; letter-spacing: -.1px; }
.map-shadow { position: absolute; left: 1684px; top: 305px; width: 780px; height: 412px; box-shadow: 0 36px 120px rgba(0, 0, 0, .25); }

.map { position: absolute; left: 1816px; top: 552px; width: 780px; height: 412px; overflow: hidden; }
.tiles { display: block; }
.labels text { font-family: Roboto, "Noto Sans", sans-serif; fill: #43474a; stroke: rgba(255, 255, 255, .75); stroke-width: 1.2px; paint-order: stroke; }
.labels .c { font-weight: 500; fill: #2f3335; }
.labels .s { fill: #555b60; }
.labels .r { letter-spacing: 1.1px; fill: #4a5054; font-weight: 500; }
.labels .b { font-weight: 700; fill: #202325; }
.box, .menu, .truck { position: absolute; background: #fff; }
.box { top: 10px; height: 40px; border-radius: 3px; display: flex; align-items: center; padding-bottom: 1px; }
.box b { font-size: 11.6px; font-weight: 600; letter-spacing: -.45px; width: 57px; padding-top: 1px; }
.track { left: 132px; width: 169px; padding-left: 20px; }
.duration { left: 595px; width: 170px; padding-left: 19px; }
.duration b { width: 58px; }
.select { width: 73px; height: 17px; border: .8px solid #b5b8bc; border-radius: 5px; display: flex; align-items: center; justify-content: space-between; padding: 1px 6px 0 6.5px; font-size: 7.8px; color: #55595e; }
.duration .select { padding-left: 8px; padding-right: 8px; }
.select svg { width: 6px; height: 4px; fill: none; stroke: #333; stroke-width: .9; }
.menu { font-size: 7.8px; color: #55595e; border-radius: 5px; box-shadow: 0 4px 12px rgba(0, 0, 0, .12); clip-path: inset(0 -20px -20px -20px); }
.modes { left: 207px; top: 45px; width: 74px; height: 39px; }
.modes p { display: flex; align-items: center; gap: 4px; height: 19px; padding-left: 9.5px; border-bottom: .6px solid #eceef0; white-space: nowrap; }
.modes p:last-child { border: 0; }
.modes svg { width: 8px; height: 8px; margin-top: -2px; }
.days { left: 672px; top: 45px; width: 72px; height: 96px; padding: 0 4px; }
.days p { height: 19px; line-height: 20px; padding-left: 5.5px; border-bottom: .6px solid #eceef0; font-size: 8.2px; }
.days p:last-child { border: 0; }
.truck { left: 595px; top: 193.5px; width: 169px; height: 182.5px; border-radius: 6px; padding: 9px 9px 0 11.5px; font-size: 7.8px; }
.truck small { display: block; font-size: 8px; line-height: 11px; color: #a5a9ad; }
.truck b { display: block; font-size: 10.2px; line-height: 11px; font-weight: 700; color: #202325; }
.goods { line-height: 20px; height: 22px; border-bottom: .8px solid #e6e8ea; color: #55595e; }
.stop { position: relative; padding: 30px 0 0 15px; height: 80.5px; }
.stop i { position: absolute; left: 0; top: 32.5px; width: 6px; height: 6px; border-radius: 50%; background: #f2454f; }
.stop p { line-height: 12px; font-size: 7.8px; letter-spacing: -.14px; color: #64748b; white-space: nowrap; }
.stop a { display: block; width: 50px; margin-left: -3.5px; font-size: 7.8px; line-height: 11px; color: #718ce6; border-bottom: .7px solid #718ce6; white-space: nowrap; }
.done { padding-top: 9.5px; }
.done i { top: 12.5px; background: #0db37a; }
.done p { color: #25272d; font-weight: 500; letter-spacing: -.2px; }
.done a { opacity: .8; }
</style>
